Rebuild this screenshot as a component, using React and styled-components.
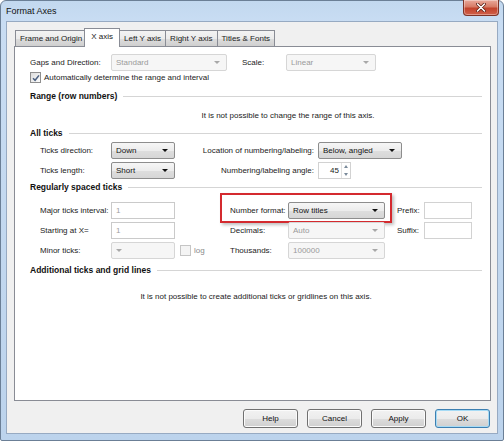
import React from "react";
import styled, { createGlobalStyle, css } from "styled-components";

const GlobalStyle = createGlobalStyle`
  html, body { margin: 0; padding: 0; background: #fff; }
  body {
    font-family: "Liberation Sans", Arial, sans-serif;
    font-size: 8px;
    color: #222;
  }
  * { box-sizing: border-box; }
`;

const Window = styled.div`
  width: 504px;
  height: 441px;
  border: 1px solid #6b7f96;
  border-radius: 6px 6px 2px 2px;
  background: linear-gradient(180deg, #c2d8ef 0%, #c9ddf3 5%, #bcd3ec 100%);
  display: flex;
  flex-direction: column;
  padding: 0 5px 6px 5px;
`;

const TitleBar = styled.div`
  height: 20px;
  display: flex;
  align-items: flex-start;
  justify-content: space-between;
`;

const Title = styled.div`
  font-size: 9px;
  line-height: 20px;
  color: #111;
`;

const CloseButton = styled.div`
  width: 36px;
  height: 16px;
  margin-top: -1px;
  margin-right: -1px;
  border: 1px solid #7e3327;
  border-top: none;
  border-radius: 0 0 4px 4px;
  background: linear-gradient(180deg, #e9a99b 0%, #d77b66 45%, #c2432c 55%, #d0604a 100%);
  box-shadow: inset 0 0 0 1px rgba(255, 255, 255, 0.35);
  display: flex;
  align-items: center;
  justify-content: center;
`;

const Client = styled.div`
  flex: 1;
  background: #f0f0f0;
  border: 1px solid #97aac2;
  padding: 6px 6px 0 7px;
  display: flex;
  flex-direction: column;
`;

const TabStrip = styled.div`
  height: 18px;
  display: flex;
  align-items: flex-end;
  padding-left: 1px;
`;

const Tab = styled.div`
  height: 16px;
  padding: 0 4px;
  line-height: 15px;
  white-space: nowrap;
  border: 1px solid #898c95;
  border-bottom: none;
  margin-right: -1px;
  background: linear-gradient(180deg, #f3f3f3 0%, #ebebeb 50%, #dddddd 51%, #cfcfcf 100%);
  ${(p) =>
    p.$active &&
    css`
      position: relative;
      z-index: 1;
      height: 19px;
      margin: 0 -1px -1px -2px;
      padding: 0 6px;
      line-height: 16px;
      background: #fff;
    `}
`;

const Panel = styled.div`
  height: 355px;
  background: #fff;
  border: 1px solid #898c95;
  padding: 0 8px 0 15px;
  display: flex;
  flex-direction: column;
`;

const Row = styled.div`
  display: grid;
  grid-template-columns: ${(p) => p.$cols};
  align-items: center;
  height: 17px;
  margin-top: ${(p) => p.$mt}px;
  padding-left: ${(p) => p.$indent || 0}px;
`;

const Label = styled.span`
  white-space: nowrap;
  ${(p) =>
    p.$right &&
    css`
      text-align: right;
      padding-right: 4px;
    `}
  padding-left: ${(p) => p.$pad || 0}px;
`;

const SectionHeader = styled.div`
  height: 14px;
  margin-top: ${(p) => p.$mt}px;
  display: flex;
  align-items: center;
  gap: 6px;
  font-weight: bold;
  font-size: 8.5px;
  color: #111;
  white-space: nowrap;

  &::after {
    content: "";
    flex: 1;
    height: 1px;
    background: #d5d5d5;
  }
`;

const Message = styled.div`
  height: 14px;
  line-height: 14px;
  margin-top: ${(p) => p.$mt}px;
  padding-left: ${(p) => p.$shift || 0}px;
  text-align: center;
`;

const CheckRow = styled.label`
  height: 13px;
  display: flex;
  align-items: center;
  gap: 3px;
`;

const Box = styled.span`
  width: 11px;
  height: 11px;
  border: 1px solid ${(p) => (p.$disabled ? "#c5c5c5" : "#8f8f8f")};
  background: ${(p) =>
    p.$disabled ? "#f4f4f4" : "linear-gradient(135deg, #dcdcdc, #fdfdfd)"};
  display: flex;
  align-items: center;
  justify-content: center;
  flex: none;
`;

const Combo = styled.div`
  height: 17px;
  display: flex;
  align-items: center;
  justify-content: space-between;
  padding: 0 6px 0 4px;
  border-radius: 2px;
  white-space: nowrap;
  ${(p) =>
    p.$disabled
      ? css`
          border: 1px solid #d6d6d6;
          background: #f6f6f6;
          color: #9a9a9a;
        `
      : css`
          border: 1px solid #8d8d8d;
          background: linear-gradient(180deg, #f6f6f6 0%, #ececec 50%, #dedede 51%, #d6d6d6 100%);
          color: #111;
        `}

  &::after {
    content: "";
    border-left: 3px solid transparent;
    border-right: 3px solid transparent;
    border-top: 3px solid ${(p) => (p.$disabled ? "#a8a8a8" : "#111")};
  }
`;

const TextBox = styled.div`
  height: 17px;
  line-height: 15px;
  padding: 0 4px;
  border: 1px solid ${(p) => (p.$disabled ? "#cacaca" : "#d2d2d2")};
  background: #fff;
  color: ${(p) => (p.$disabled ? "#a0a0a0" : "#111")};
`;

const Spin = styled.div`
  width: 33px;
  height: 17px;
  border: 1px solid #d2d2d2;
  background: #fff;
  display: flex;
  align-items: center;
  justify-content: flex-end;
`;

const SpinValue = styled.span`
  padding-right: 2px;
`;

const SpinButtons = styled.div`
  width: 9px;
  height: 15px;
  display: flex;
  flex-direction: column;
  border-left: 1px solid #e2e2e2;
`;

const SpinArrow = styled.div`
  flex: 1;
  display: flex;
  align-items: center;
  justify-content: center;

  &::after {
    content: "";
    border-left: 2.5px solid transparent;
    border-right: 2.5px solid transparent;
    ${(p) =>
      p.$up
        ? css`border-bottom: 3px solid #7a8a9a;`
        : css`border-top: 3px solid #7a8a9a;`}
  }
`;

const Field = styled.div`
  display: grid;
  grid-template-columns: 58px 97px;
  align-items: center;
  position: relative;

  ${(p) =>
    p.$highlight &&
    css`
      &::before {
        content: "";
        position: absolute;
        left: -10px;
        right: -7px;
        top: -9px;
        bottom: -4px;
        border: 2px solid #d42a2f;
        box-shadow: 2px 2px 3px rgba(0, 0, 0, 0.25);
        pointer-events: none;
      }
    `}
`;

const LogCell = styled.div`
  display: flex;
  align-items: center;
  gap: 3px;
  padding-left: 5px;
  color: #8a8a8a;
`;

const Footer = styled.div`
  display: flex;
  justify-content: flex-end;
  gap: 9px;
  margin-top: 8px;
  padding-right: 1px;
`;

const Button = styled.div`
  width: 55px;
  height: 19px;
  display: flex;
  align-items: center;
  justify-content: center;
  color: #111;
  border: 1px solid ${(p) => (p.$default ? "#3c7fb1" : "#707070")};
  border-radius: 3px;
  background: linear-gradient(180deg, #f2f2f2 0%, #ebebeb 50%, #dddddd 51%, #cfcfcf 100%);
  box-shadow: inset 0 0 0 1px ${(p) => (p.$default ? "#a6dbf5" : "#fbfbfb")};
`;

const Check = () => (
  <svg width="8" height="8" viewBox="0 0 8 8">
    <path d="M1 4.2 L3.1 6.3 L7 1.4" fill="none" stroke="#4a5f80" strokeWidth="1.5" />
  </svg>
);

const CloseIcon = () => (
  <svg width="10" height="9" viewBox="0 0 10 9">
    <path d="M1.5 1 L8.5 8 M8.5 1 L1.5 8" stroke="#5a1c12" strokeWidth="3" strokeLinecap="round" />
    <path d="M1.5 1 L8.5 8 M8.5 1 L1.5 8" stroke="#fff" strokeWidth="1.6" strokeLinecap="round" />
  </svg>
);

const tabs = ["Frame and Origin", "X axis", "Left Y axis", "Right Y axis", "Titles & Fonts"];

const ticksCols = "71px 64px 143px 84px";
const regularCols = "71px 64px 55px 155px 39px 48px";

export default function App() {
  return (
    <>
      <GlobalStyle />
      <Window>
        <TitleBar>
          <Title>Format Axes</Title>
          <CloseButton>
            <CloseIcon />
          </CloseButton>
        </TitleBar>
        <Client>
          <TabStrip>
            {tabs.map((t) => (
              <Tab key={t} $active={t === "X axis"}>
                {t}
              </Tab>
            ))}
          </TabStrip>
          <Panel>
            <Row $mt={7} $cols="81px 116px 15px 44px 90px">
              <Label>Gaps and Direction:</Label>
              <Combo $disabled>Standard</Combo>
              <span />
              <Label>Scale:</Label>
              <Combo $disabled>Linear</Combo>
            </Row>
            <CheckRow>
              <Box>
                <Check />
              </Box>
              Automatically determine the range and interval
            </CheckRow>

            <SectionHeader $mt={5}>Range (row numbers)</SectionHeader>
            <Message $mt={6} $shift={64}>
              It is not possible to change the range of this axis.
            </Message>

            <SectionHeader $mt={3}>All ticks</SectionHeader>
            <Row $mt={2} $indent={10} $cols={ticksCols}>
              <Label>Ticks direction:</Label>
              <Combo>Down</Combo>
              <Label $right>Location of numbering/labeling:</Label>
              <Combo>Below, angled</Combo>
            </Row>
            <Row $mt={3} $indent={10} $cols={ticksCols}>
              <Label>Ticks length:</Label>
              <Combo>Short</Combo>
              <Label $right>Numbering/labeling angle:</Label>
              <Spin>
                <SpinValue>45</SpinValue>
                <SpinButtons>
                  <SpinArrow $up />
                  <SpinArrow />
                </SpinButtons>
              </Spin>
            </Row>

            <SectionHeader $mt={1}>Regularly spaced ticks</SectionHeader>
            <Row $mt={8} $indent={10} $cols={regularCols}>
              <Label>Major ticks interval:</Label>
              <TextBox $disabled>1</TextBox>
              <span />
              <Field $highlight>
                <Label>Number format:</Label>
                <Combo>Row titles</Combo>
              </Field>
              <Label $pad={12}>Prefix:</Label>
              <TextBox />
            </Row>
            <Row $mt={3} $indent={10} $cols={regularCols}>
              <Label>Starting at X=</Label>
              <TextBox $disabled>1</TextBox>
              <span />
              <Field>
                <Label>Decimals:</Label>
                <Combo $disabled>Auto</Combo>
              </Field>
              <Label $pad={12}>Suffix:</Label>
              <TextBox />
            </Row>
            <Row $mt={3} $indent={10} $cols={regularCols}>
              <Label>Minor ticks:</Label>
              <Combo $disabled />
              <LogCell>
                <Box $disabled />
                log
              </LogCell>
              <Field>
                <Label>Thousands:</Label>
                <Combo $disabled>100000</Combo>
              </Field>
            </Row>

            <SectionHeader $mt={4}>Additional ticks and grid lines</SectionHeader>
            <Message $mt={13}>
              It is not possible to create additional ticks or gridlines on this axis.
            </Message>
          </Panel>
          <Footer>
            <Button>Help</Button>
            <Button>Cancel</Button>
            <Button>Apply</Button>
            <Button $default>OK</Button>
          </Footer>
        </Client>
      </Window>
    </>
  );
}
